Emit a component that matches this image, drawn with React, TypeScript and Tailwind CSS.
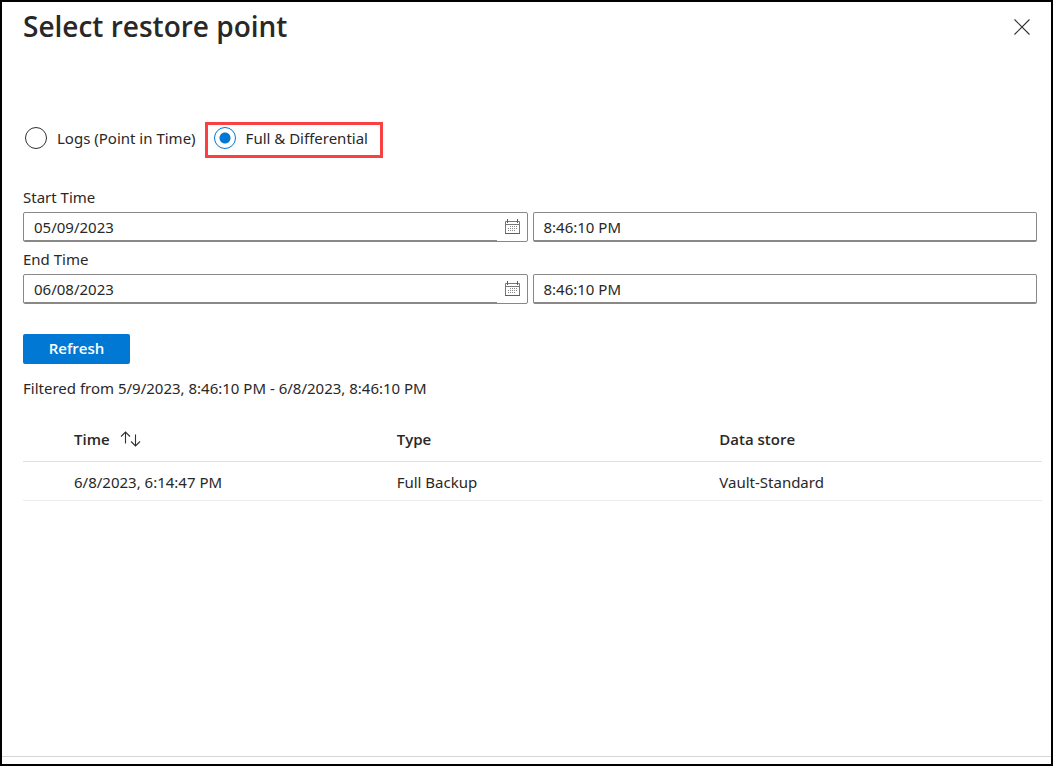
import { useState } from "react";

type FieldProps = { id: string; label: string; date: string; time: string };

function CalendarIcon() {
  return (
    <svg width="16" height="16" viewBox="0 0 16 16" fill="none" aria-hidden="true">
      <path stroke="#797775" d="M1.500 2.500h14v12h-14zM1.500 5.500h14" />
      <path stroke="#605e5c" d="M3.500 0v4M13.500 0v4M1 14.500h15" />
      <path stroke="#8a8886" d="M6 7.500h8M4 9.500h10M4 11.500h8" strokeDasharray="1 1" />
    </svg>
  );
}

function DateTimeField({ id, label, date, time }: FieldProps) {
  return (
    <div>
      <label htmlFor={id} className="flex h-8 items-center pt-0.5">
        {label}
      </label>
      <div className="grid grid-cols-2 gap-[5px]">
        <div className="flex h-[30px] overflow-hidden rounded-[2px] border border-[#8a8886]">
          <input
            id={id}
            type="text"
            defaultValue={date}
            className="min-w-0 flex-1 border-b border-[#8a8886] px-[10px] outline-none"
          />
          <button type="button" aria-label="Open calendar" className="flex w-[30px] items-center justify-center">
            <CalendarIcon />
          </button>
        </div>
        <input
          type="text"
          aria-label={`${label} of day`}
          defaultValue={time}
          className="h-[30px] w-full min-w-0 rounded-[2px] border border-b-2 border-[#8a8886] px-[10px] outline-none"
        />
      </div>
    </div>
  );
}

const radioClass =
  "size-[22px] shrink-0 appearance-none rounded-full border border-[#323130] bg-white checked:border-[#0078d4] checked:bg-[radial-gradient(circle,#0078d4_5px,transparent_6px)]";

export default function App() {
  const [mode, setMode] = useState("full");
  return (
    <main className="flex min-h-screen flex-col border-2 border-black bg-white font-['Noto_Sans','Open_Sans',sans-serif] text-[15px] leading-5 text-[#292827]">
      <header className="flex h-12 items-center justify-between pr-[21px] pl-[21px]">
        <h1 className="font-['Open_Sans','Noto_Sans',sans-serif] text-[28px] leading-9 font-semibold">Select restore point</h1>
        <button type="button" aria-label="Close" className="pt-0.5">
          <svg width="16" height="16" viewBox="0 0 16 16" stroke="#323130" strokeWidth="1.1">
            <path d="M.5 .5l15 15M15.5 .5l-15 15" />
          </svg>
        </button>
      </header>

      <div className="mt-[72px] flex-1 pr-[9px] pl-[21px]">
        <fieldset className="flex items-center gap-[9px]">
          <label className="flex h-9 items-center gap-[10px] pb-1 pl-0.5">
            <input type="radio" name="mode" checked={mode === "logs"} onChange={() => setMode("logs")} className={radioClass} />
            Logs (Point in Time)
          </label>
          <label className="flex h-9 items-center gap-[10px] border-3 border-[#f94144] pr-3 pb-1 pl-[6px]">
            <input type="radio" name="mode" checked={mode === "full"} onChange={() => setMode("full")} className={radioClass} />
            Full &amp; Differential
          </label>
        </fieldset>

        <div className="mt-[22px] pr-[5px]">
          <DateTimeField id="start" label="Start Time" date="05/09/2023" time="8:46:10 PM" />
          <DateTimeField id="end" label="End Time" date="06/08/2023" time="8:46:10 PM" />
        </div>

        <button type="button" className="mt-[30px] block h-[30px] w-[107px] rounded-[2px] bg-[#0078d4] pb-0.5 font-['Open_Sans','Noto_Sans',sans-serif] font-semibold text-white">
          Refresh
        </button>
        <p className="mt-[14px]">Filtered from 5/9/2023, 8:46:10 PM - 6/8/2023, 8:46:10 PM</p>

        <table className="mt-[19px] w-full table-fixed text-left">
          <thead className="font-['Open_Sans','Noto_Sans',sans-serif]">
            <tr className="h-11 border-b border-[#e1dfdd]">
              <td className="w-[51px]" />
              <th scope="col" className="font-semibold">
                <button type="button" className="flex items-center gap-[10px]">
                  Time
                  <svg width="21" height="16" viewBox="0 0 21 16" fill="none" stroke="#323130" strokeWidth="1.1" aria-hidden="true">
                    <path d="M5.500 12.500V1M1 5.500L5.500 1 10 5.500M15.500 3.500V15M11 10.500L15.500 15 20 10.500" />
                  </svg>
                </button>
              </th>
              <th scope="col" className="font-semibold">Type</th>
              <th scope="col" className="font-semibold">Data store</th>
            </tr>
          </thead>
          <tbody>
            <tr className="h-[39px] border-b border-[#edebe9]">
              <td />
              <td className="pt-0.5">6/8/2023, 6:14:47 PM</td>
              <td className="pt-0.5">Full Backup</td>
              <td className="pt-0.5">Vault-Standard</td>
            </tr>
          </tbody>
        </table>
      </div>

      <footer className="h-2 border-t border-[#d6d6d6]" />
    </main>
  );
}
